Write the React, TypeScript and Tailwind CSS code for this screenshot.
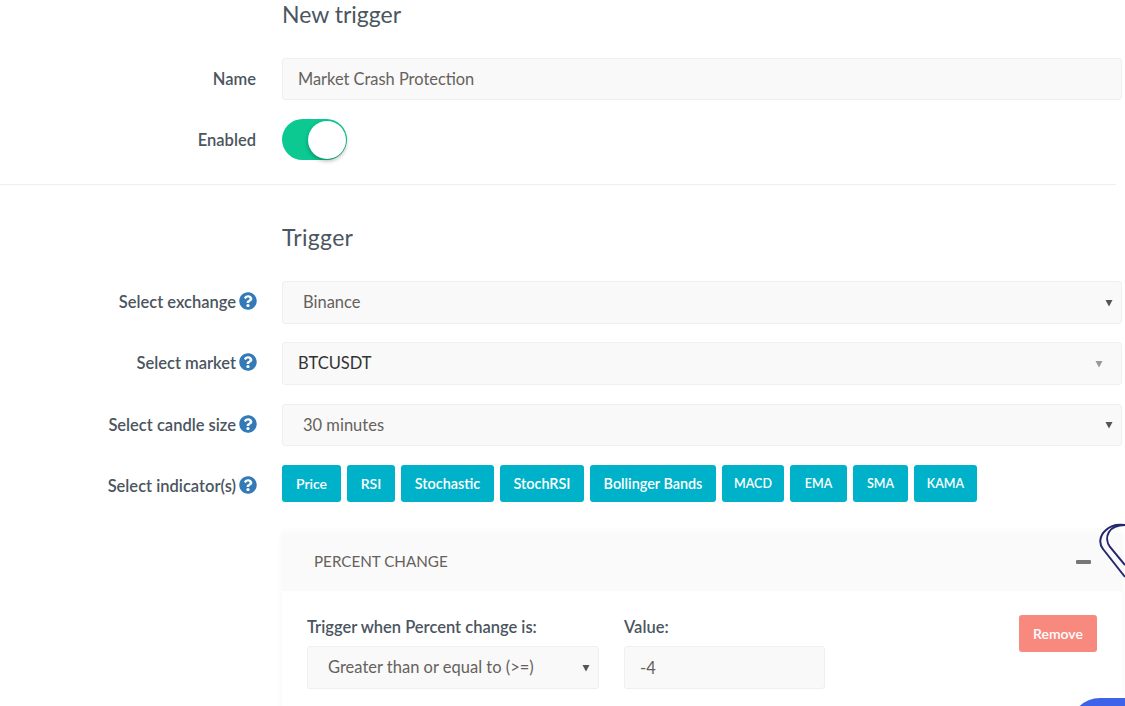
import React from 'react'
import { FaQuestionCircle } from 'react-icons/fa'

const indicators = [
  { name: 'Price', cls: 'w-[59px] text-[14px]' },
  { name: 'RSI', cls: 'w-[48px] text-[14px]' },
  { name: 'Stochastic', cls: 'w-[93px] text-[14.4px]' },
  { name: 'StochRSI', cls: 'w-[84px] text-[14.4px]' },
  { name: 'Bollinger Bands', cls: 'w-[126px] text-[14.4px]' },
  { name: 'MACD', cls: 'w-[62px] pt-[2px] text-[12.5px]' },
  { name: 'EMA', cls: 'w-[57px] pt-[2px] text-[12.5px]' },
  { name: 'SMA', cls: 'w-[55px] pt-[2px] text-[12.5px]' },
  { name: 'KAMA', cls: 'w-[63px] pt-[2px] text-[12.5px]' },
]

const Caret = ({ light }: { light?: boolean }) => (
  <svg width="8" height="8" viewBox="0 0 8 8" className="shrink-0">
    <path d="M0.5 1 H7.5 L4 7.5 Z" fill={light ? '#999999' : '#555555'} />
  </svg>
)

const SelectBox = ({ value, h, dark }: { value: string; h: string; dark?: boolean }) => (
  <div className={`${h} flex items-center justify-between rounded-[3px] border border-[#efefef] bg-[#f9f9f9] ${dark ? 'pl-[15px] pr-[18px] text-[#333333]' : 'pl-[20px] pr-[8px] text-[#66615b]'} text-[16.5px]`}>
    <span>{value}</span>
    <Caret light={dark} />
  </div>
)

const Row = ({ label, help, className, children }: { label: string; help?: boolean; className: string; children: React.ReactNode }) => (
  <div className={`flex ${className}`}>
    <div className="flex h-[42px] w-[256px] shrink-0 items-center justify-end text-[16.5px] font-semibold text-[#4b5560]">
      <span>{label}</span>
      {help && <FaQuestionCircle className="mb-[3px] ml-[3px] mr-[-1px] text-[18px] text-[#337ab7]" />}
    </div>
    <div className="ml-[26px] flex-1">{children}</div>
  </div>
)

export default function App() {
  return (
    <div className="relative h-[706px] w-[1125px] overflow-hidden bg-white font-['Lato','Liberation_Sans',sans-serif] pr-[3px]">
      <div className="pl-[282px] text-[23px] leading-[28px] text-[#4b5560]">New trigger</div>

      <Row label="Name" className="mt-[30px]">
        <input
          readOnly
          value="Market Crash Protection"
          className="h-[42px] w-full rounded-[3px] border border-[#efefef] bg-[#f9f9f9] px-[15px] pb-[2px] text-[16.4px] text-[#66615b] outline-none"
        />
      </Row>

      <Row label="Enabled" className="mt-[19px]">
        <div className="flex h-[41px] w-[65px] items-center justify-end rounded-full bg-[#0cc991] pr-[1px]">
          <div className="h-[38px] w-[38px] rounded-full bg-white shadow-[0_2px_4px_rgba(0,0,0,0.3)]" />
        </div>
      </Row>

      <hr className="mt-[23px] mr-[6px] border-t border-[#eeeeee]" />

      <div className="mt-[38px] pl-[282px] text-[23px] leading-[28px] tracking-[0.3px] text-[#4b5560]">Trigger</div>

      <Row label="Select exchange" help className="mt-[30px]">
        <SelectBox value="Binance" h="h-[43px]" />
      </Row>
      <Row label="Select market" help className="mt-[18px]">
        <SelectBox value="BTCUSDT" h="h-[43px]" dark />
      </Row>
      <Row label="Select candle size" help className="mt-[19px]">
        <SelectBox value="30 minutes" h="h-[42px]" />
      </Row>
      <Row label="Select indicator(s)" help className="mt-[19px]">
        <div className="flex gap-[6px]">
          {indicators.map((item) => (
            <button key={item.name} className={`h-[37px] rounded-[3px] bg-[#00b2c9] font-semibold text-white ${item.cls}`}>
              {item.name}
            </button>
          ))}
        </div>
      </Row>

      <div className="ml-[282px] mt-[26px] shadow-[0_0_8px_rgba(0,0,0,0.04)]">
        <div className="flex h-[58px] items-center justify-between bg-[#fafafa] pl-[32px] pr-[31px] text-[15.2px] text-[#66615b]">
          <span className="pb-[2px]">PERCENT CHANGE</span>
          <span className="h-[4px] w-[15px] rounded-[1px] bg-[#777777]" />
        </div>
        <div className="flex h-[130px] items-start justify-between pl-[25px] pr-[25px] pt-[24px]">
          <div className="flex gap-[25px]">
            <div className="w-[292px]">
              <div className="mb-[7px] text-[16.5px] font-semibold leading-[24px] text-[#4b5560]">Trigger when Percent change is:</div>
              <SelectBox value="Greater than or equal to (>=)" h="h-[43px]" />
            </div>
            <div className="w-[201px]">
              <div className="mb-[7px] text-[16.5px] font-semibold leading-[24px] text-[#4b5560]">Value:</div>
              <input
                readOnly
                value="-4"
                className="h-[43px] w-full rounded-[3px] border border-[#efefef] bg-[#f9f9f9] px-[15px] text-[16.5px] text-[#66615b] outline-none"
              />
            </div>
          </div>
          <button className="h-[37px] w-[78px] rounded-[3px] bg-[#f8897e] text-[14px] font-semibold text-white">Remove</button>
        </div>
      </div>

      {/* floating widgets over the page */}
      <svg className="absolute left-[1098px] top-[523px]" width="27" height="60" viewBox="0 0 27 60" fill="none" stroke="#23276f" strokeWidth="2">
        <path d="M27 2 C20 1 13 2 8 7 C1 13 1 21 5 26 L27 54" />
        <path d="M27 2 C21 2 14 4 11 9 C8 14 9 20 12 24 L27 42" />
      </svg>
      <div className="absolute left-[1070px] top-[698px] h-[60px] w-[90px] rounded-full bg-[#3f63e8]" />
    </div>
  )
}
